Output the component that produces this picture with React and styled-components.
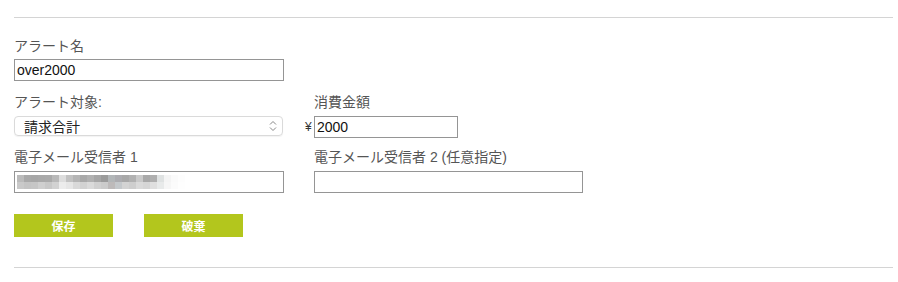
import React from "react";
import styled, { createGlobalStyle } from "styled-components";

const GlobalStyle = createGlobalStyle`
  body {
    margin: 0;
    background: #fff;
    font-family: "Liberation Sans", "Noto Sans CJK JP", sans-serif;
  }
`;

const Page = styled.div`
  padding: 17px 5px 0 14px;
`;

const Rule = styled.hr`
  margin: 0;
  border: 0;
  border-top: 1px solid #d4d4d4;
`;

const Form = styled.form`
  padding: 20px 0 30px;
`;

const Row = styled.div`
  display: flex;
  gap: 30px;
  margin-top: ${({ top }) => top || 0}px;
`;

const Field = styled.div`
  display: flex;
  flex-direction: column;
  width: ${({ width }) => width}px;
`;

const Label = styled.label`
  font-size: 14px;
  line-height: 16px;
  color: #555;
  margin-bottom: ${({ gap }) => gap || 5}px;
  white-space: nowrap;
`;

const TextInput = styled.input`
  box-sizing: border-box;
  width: ${({ width }) => width}px;
  height: 22px;
  margin: 0;
  padding: 0 2px;
  border: 1px solid #959595;
  font-family: "Liberation Sans", "Noto Sans CJK JP", sans-serif;
  font-size: 14px;
  color: #111;
  outline: none;
`;

const MaskedBox = styled.div`
  box-sizing: border-box;
  width: ${({ width }) => width}px;
  height: 22px;
  border: 1px solid #959595;
  display: flex;
  align-items: center;
  padding-left: 2px;
`;

const SelectBox = styled.div`
  box-sizing: border-box;
  width: 269px;
  height: 20px;
  border: 1px solid #dadada;
  border-radius: 4px;
  box-shadow: 0 1px 1px rgba(0, 0, 0, 0.05);
  display: flex;
  align-items: center;
  justify-content: space-between;
  padding: 0 5px 0 9px;
  font-size: 14px;
  color: #222;
`;

const Control = styled.div`
  display: flex;
  align-items: center;
`;

const Yen = styled.span`
  width: 9px;
  margin-left: -9px;
  font-size: 12px;
  color: #333;
`;

const Buttons = styled.div`
  display: flex;
  gap: 31px;
  margin-top: 21px;
`;

const Button = styled.button`
  width: 99px;
  height: 23px;
  margin: 0;
  padding: 0;
  border: 0;
  background: #b3c61d;
  color: #fff;
  font-family: "Liberation Sans", "Noto Sans CJK JP", sans-serif;
  font-size: 12px;
  font-weight: bold;
`;

const topRow = ["#bbb", "#a9a9a9", "#a7a7a7", "#a9a9a9", "#aaa", "#b9b9b9", "#ddd", "#c2c2c2", "#b5b5b5", "#a9a9a9", "#b1b1b1", "#a6a6a6", "#9b9b9b", "#b2b6b8", "#acacb0", "#a8a8a8", "#b1b1b1", "#c9c9c9", "#a9a9a9", "#afafaf", "#dfe2e2", "#f4f4f4", "#fafafa", "#fdfdfd", "#fff"];
const bottomRow = ["#c9c9c9", "#c4c4c4", "#c6c6c6", "#cfcfcf", "#c8c8c8", "#d2d2d2", "#ececec", "#e6e6e6", "#d9d9d9", "#d2d2d2", "#dadada", "#d0d0d0", "#cbcbcb", "#bdbaba", "#c4c8cb", "#d3d3d3", "#cecece", "#dadada", "#d6d6d6", "#dfdfdf", "#e8eaea", "#f6f6f6", "#fbfbfb", "#fefefe", "#fff"];

const Mosaic = () => (
  <svg width="177" height="14" viewBox="0 0 177 14">
    {topRow.map((c, i) => (
      <rect key={"t" + i} x={i * 7} y={0} width={7} height={7} fill={c} />
    ))}
    {bottomRow.map((c, i) => (
      <rect key={"b" + i} x={i * 7} y={7} width={7} height={7} fill={c} />
    ))}
  </svg>
);

const Chevron = () => (
  <svg width="8" height="12" viewBox="0 0 8 12" fill="none" stroke="#888" strokeWidth="1">
    <path d="M1 4.5 L4 1.5 L7 4.5" />
    <path d="M1 7.5 L4 10.5 L7 7.5" />
  </svg>
);

export default function App() {
  return (
    <>
      <GlobalStyle />
      <Page>
        <Rule />
        <Form>
          <Row>
            <Field width={270}>
              <Label>アラート名</Label>
              <TextInput width={270} defaultValue="over2000" />
            </Field>
          </Row>
          <Row top={13}>
            <Field width={270}>
              <Label gap={6}>アラート対象:</Label>
              <SelectBox>
                <span>請求合計</span>
                <Chevron />
              </SelectBox>
            </Field>
            <Field width={270}>
              <Label gap={6}>消費金額</Label>
              <Control>
                <Yen>¥</Yen>
                <TextInput width={144} defaultValue="2000" />
              </Control>
            </Field>
          </Row>
          <Row top={11}>
            <Field width={270}>
              <Label gap={6}>電子メール受信者 1</Label>
              <MaskedBox width={270}>
                <Mosaic />
              </MaskedBox>
            </Field>
            <Field width={270}>
              <Label gap={6}>電子メール受信者 2 (任意指定)</Label>
              <TextInput width={269} />
            </Field>
          </Row>
          <Buttons>
            <Button type="button">保存</Button>
            <Button type="button">破棄</Button>
          </Buttons>
        </Form>
        <Rule />
      </Page>
    </>
  );
}
